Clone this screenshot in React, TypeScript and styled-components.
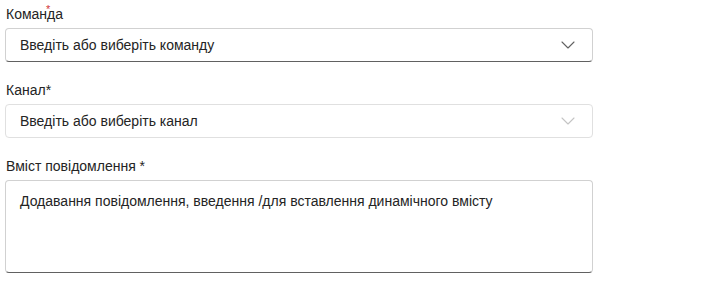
import React from 'react';
import { styled, createGlobalStyle } from 'styled-components';

const GlobalStyle = createGlobalStyle`
    html, body {
        margin: 0;
        padding: 0;
        background: #ffffff;
    }
    body {
        font-family: 'Liberation Sans', Arial, sans-serif;
        color: #242424;
    }
`;

const Form = styled.div`
    display: flex;
    flex-direction: column;
    gap: 18px;
    width: 588px;
    padding: 4px 0 0 5px;
`;

const Field = styled.div`
    display: flex;
    flex-direction: column;
`;

const Label = styled.label`
    position: relative;
    display: block;
    height: 24px;
    padding-left: 1px;
    font-size: 14px;
    line-height: 20px;
    color: #242424;
`;

const FloatingStar = styled.span`
    position: absolute;
    left: 41px;
    top: 0;
    font-size: 11px;
    line-height: 11px;
    color: #d13438;
`;

const SelectBox = styled.div<{ $muted?: boolean }>`
    box-sizing: border-box;
    display: flex;
    align-items: center;
    justify-content: space-between;
    height: 34px;
    padding: 0 17px 0 14px;
    border: 1px solid ${(p) => (p.$muted ? '#e0e0e0' : '#d1d1d1')};
    border-bottom-color: ${(p) => (p.$muted ? '#e0e0e0' : '#616161')};
    border-radius: 4px;
    background: #ffffff;
    font-size: 14px;
    color: #242424;
`;

const Chevron = styled.svg<{ $muted?: boolean }>`
    width: 14px;
    height: 8px;
    color: ${(p) => (p.$muted ? '#c4c4c4' : '#616161')};
`;

const TextArea = styled.div`
    box-sizing: border-box;
    height: 93px;
    padding: 10px 14px;
    border: 1px solid #d1d1d1;
    border-bottom-color: #616161;
    border-radius: 4px;
    background: #ffffff;
    font-size: 14px;
    line-height: 20px;
    color: #242424;
`;

const ChevronIcon = ({ muted }: { muted?: boolean }) => (
    <Chevron $muted={muted} viewBox="0 0 14 8" fill="none">
        <path d="M1 1l6 6 6-6" stroke="currentColor" strokeWidth="1.1" strokeLinecap="round" strokeLinejoin="round" />
    </Chevron>
);

const App = () => {
    return (
        <>
            <GlobalStyle />
            <Form>
                <Field>
                    <Label>
                        Команда
                        <FloatingStar>*</FloatingStar>
                    </Label>
                    <SelectBox>
                        <span>Введіть або виберіть команду</span>
                        <ChevronIcon />
                    </SelectBox>
                </Field>
                <Field>
                    <Label>Канал*</Label>
                    <SelectBox $muted>
                        <span>Введіть або виберіть канал</span>
                        <ChevronIcon muted />
                    </SelectBox>
                </Field>
                <Field>
                    <Label>Вміст повідомлення *</Label>
                    <TextArea>Додавання повідомлення, введення /для вставлення динамічного вмісту</TextArea>
                </Field>
            </Form>
        </>
    );
};

export default App;
